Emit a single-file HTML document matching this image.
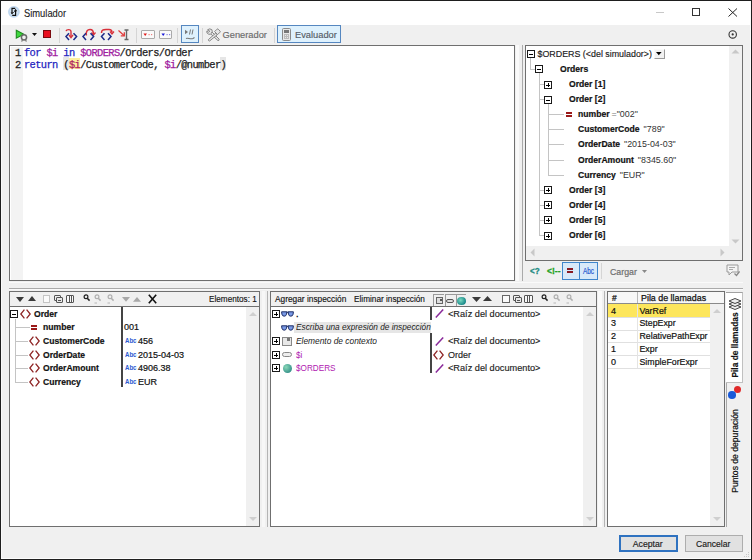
<!DOCTYPE html>
<html><head><meta charset="utf-8">
<style>
*{margin:0;padding:0;box-sizing:border-box}
html,body{width:752px;height:560px;overflow:hidden;background:#f0f0f0}
body{position:relative;font-family:"Liberation Sans",sans-serif;color:#000}
.a{position:absolute}
.t{position:absolute;white-space:nowrap;line-height:14px;height:14px}
.box{position:absolute;background:#fff;border:1px solid #6f6f6f}
.sq{position:absolute;width:9px;height:9px;border:1px solid #333;background:#fff}
.sq:before{content:"";position:absolute;left:1px;top:3px;width:5px;height:1px;background:#000}
.sq.p:after{content:"";position:absolute;left:3px;top:1px;width:1px;height:5px;background:#000}
.dv{position:absolute;width:0;border-left:1px dotted #a0a0a0}
.dh{position:absolute;height:0;border-top:1px dotted #a0a0a0}
.b{font-weight:bold}
.sep{position:absolute;width:1px;background:#d5d5d5}
</style></head><body>
<!-- window frame -->
<div class="a" style="left:0;top:0;width:752px;height:25px;background:#fff"></div>
<div class="a" style="left:1px;top:25px;width:1px;height:534px;background:#fafafa"></div>
<div class="a" style="left:750px;top:1px;width:1px;height:558px;background:#fcfcfc"></div>
<div class="a" style="left:1px;top:558px;width:750px;height:1px;background:#fcfcfc"></div>
<div class="a" style="left:0;top:0;width:752px;height:1px;background:#1e1e1e"></div>
<div class="a" style="left:0;top:0;width:1px;height:560px;background:#1e1e1e"></div>
<div class="a" style="left:0;top:559px;width:752px;height:1px;background:#1e1e1e"></div>
<div class="a" style="left:751px;top:0;width:1px;height:560px;background:#1e1e1e"></div>
<svg class="a" style="left:743px;top:551px" width="7" height="7"><g fill="#c8c8c8"><rect x="5" y="1" width="1" height="1"/><rect x="3" y="3" width="1" height="1"/><rect x="5" y="3" width="1" height="1"/><rect x="1" y="5" width="1" height="1"/><rect x="3" y="5" width="1" height="1"/><rect x="5" y="5" width="1" height="1"/></g></svg>

<!-- title -->
<svg class="a" style="left:7px;top:5px" width="14" height="14" viewBox="0 0 14 14">
<circle cx="6.9" cy="6.85" r="5.9" fill="#c0d8f0"/><circle cx="6.9" cy="6.85" r="4.2" fill="#d6e6f6"/>
<path d="M8.2 3.4H5V8.2" fill="none" stroke="#111" stroke-width="1.2"/><path d="M3.6 7.4L5 9.4L6.4 7.4Z" fill="#111"/>
<path d="M5.2 10.4H8.6V5.6" fill="none" stroke="#111" stroke-width="1.2"/><path d="M7 6.2L8.6 3.8L10.2 6.2Z" fill="#111"/>
<path d="M5.4 8.6L8.2 5.8" stroke="#333" stroke-width="0.8"/>
</svg>
<div class="t" style="left:24.3px;top:6.8px;font-size:10.4px;color:#1a1a1a;-webkit-text-stroke:0.1px #1a1a1a;transform:scaleX(0.9);transform-origin:0 0">Simulador</div>
<div class="a" style="left:656px;top:12px;width:8px;height:1px;background:#c8c8c8"></div>
<div class="a" style="left:692px;top:8px;width:8px;height:8px;border:1px solid #333"></div>
<svg class="a" style="left:728px;top:8px" width="10" height="9" viewBox="0 0 10 9"><path d="M0.5 0.5L9 8.5M9 0.5L0.5 8.5" stroke="#222" stroke-width="1"/></svg>

<!-- toolbar -->
<svg class="a" style="left:15px;top:29px" width="14" height="13" viewBox="0 0 14 13">
<path d="M1.3 1.3L8.8 5.2L1.3 9.2Z" fill="#3ed83e" stroke="#1e8a1e" stroke-width="1.1"/>
<circle cx="9" cy="8.3" r="2.6" fill="none" stroke="#6a6a6a" stroke-width="1.5"/><path d="M7.3 11L6.7 12.6M10.7 11L11.3 12.6" stroke="#6a6a6a" stroke-width="1.1"/>
</svg>
<svg class="a" style="left:32px;top:33px" width="5" height="3"><path d="M0 0H5L2.5 3Z" fill="#111"/></svg>
<div class="a" style="left:43px;top:30px;width:8px;height:8px;background:#ea1020;border:1px solid #7a0a10"></div>
<div class="sep" style="left:59px;top:28px;height:15px"></div>
<svg class="a" style="left:64px;top:28px" width="15" height="13" viewBox="0 0 15 13">
<path d="M2 3.2C2.5 1.2 6.8 0.8 7 3.5V8.5" fill="none" stroke="#d8303a" stroke-width="1.4"/><path d="M5 7L7 9.6L9 7" fill="none" stroke="#d8303a" stroke-width="1.4"/>
<path d="M5 5.2L2 8.6L5 12M9.5 5.2L12.6 8.6L9.5 12" fill="none" stroke="#1c2a88" stroke-width="1.5"/>
</svg>
<svg class="a" style="left:82px;top:28px" width="14" height="13" viewBox="0 0 14 13">
<path d="M4.5 7.5C3.5 3.5 5.5 1.5 8 1.5C10.5 1.5 11.5 3.2 11.5 6" fill="none" stroke="#d8303a" stroke-width="1.4"/><path d="M9.5 4.5L11.5 7L13.5 4.5" fill="none" stroke="#d8303a" stroke-width="1.3"/>
<path d="M4 5.2L1 8.6L4 12M8.5 5.2L11.6 8.6L8.5 12" fill="none" stroke="#1c2a88" stroke-width="1.5"/>
</svg>
<svg class="a" style="left:100px;top:28px" width="15" height="13" viewBox="0 0 15 13">
<path d="M1.5 5C1.5 1.8 3 1.5 6 1.5H9C11.5 1.5 12 2.5 12 4.5" fill="none" stroke="#d8303a" stroke-width="1.5"/><path d="M10 3.5L12 6L14 3.5" fill="none" stroke="#d8303a" stroke-width="1.3"/>
<path d="M4.5 5.2L1.5 8.6L4.5 12M8 5.2L11 8.6L8 12" fill="none" stroke="#1c2a88" stroke-width="1.5"/>
</svg>
<svg class="a" style="left:117px;top:29px" width="14" height="12" viewBox="0 0 14 12">
<path d="M1.5 1.5L7 6.5" stroke="#e03a3a" stroke-width="1.2"/><path d="M3.8 6.8H7.3V3.3" fill="none" stroke="#e03a3a" stroke-width="1.3"/>
<path d="M7.5 1H11.5M7.5 10.5H11.5M9.5 1V10.5" stroke="#666" stroke-width="1.4"/>
</svg>
<div class="sep" style="left:136px;top:28px;height:15px"></div>
<div class="a" style="left:141px;top:30px;width:14px;height:8.5px;border:1.2px solid #aaa;border-radius:1px;background:#fafafa"></div>
<svg class="a" style="left:143px;top:33px" width="10" height="4"><path d="M0.5 0.5H4L2.2 3Z" fill="#e01818"/><rect x="5.5" y="1" width="1.2" height="1.2" fill="#f08080"/><rect x="8" y="1" width="1.2" height="1.2" fill="#f08080"/></svg>
<div class="a" style="left:159px;top:30px;width:13px;height:8.5px;border:1.2px solid #aaa;border-radius:1px;background:#fafafa"></div>
<svg class="a" style="left:161px;top:33px" width="10" height="4"><path d="M0.5 0.5H4L2.2 3Z" fill="#1818d8"/><rect x="5.5" y="1" width="1.2" height="1.2" fill="#8080e0"/><rect x="8" y="1" width="1.2" height="1.2" fill="#8080e0"/></svg>
<div class="sep" style="left:177px;top:28px;height:15px"></div>
<div class="a" style="left:181px;top:25px;width:18px;height:18px;background:#def1fd;border:1.5px solid #5587c0"></div>
<svg class="a" style="left:184px;top:29px" width="12" height="12" viewBox="0 0 12 12">
<path d="M1 0.8L4 3L1 5.2Z" fill="#777"/><path d="M6.5 0.5L5.5 5.5M9 0.5L8 5.5" stroke="#777" stroke-width="1"/><path d="M2 9.5C4 8.5 6 10.5 9 9.5L10.5 8.5" fill="none" stroke="#777" stroke-width="1.1"/>
</svg>
<div class="sep" style="left:202px;top:28px;height:15px"></div>
<svg class="a" style="left:206px;top:28px" width="15" height="14" viewBox="0 0 15 14">
<g fill="#e6e6e6" stroke="#7c7c7c" stroke-width="0.9">
<path d="M4.6 5.8L6.2 4.2L13.2 11.2Q13.4 12.6 12 12.6Z"/>
<path d="M9.6 5.2L11.2 6.8L3.6 13Q2.2 13 2.4 11.6Z"/>
<path d="M8.6 3.6L11 1.2Q11.6 0.6 12.2 1.2L14 3Q14.6 3.6 14 4.2L11.6 6.6Z"/>
<path d="M1.6 1.8Q3.6 0 5.8 1.6Q6.8 3.4 5.6 5L4.4 6.2Q2.6 6.8 1.2 5.2Q0.4 3.8 1 2.8L2.6 4.2L3.8 3.2Z"/>
</g>
</svg>
<div class="t" style="left:222.5px;top:27.7px;font-size:9.3px;color:#6a6a6a;-webkit-text-stroke:0.15px #6a6a6a">Generador</div>
<div class="sep" style="left:274px;top:28px;height:15px"></div>
<div class="a" style="left:277px;top:25px;width:64px;height:18px;background:#def1fd;border:1.5px solid #5587c0"></div>
<div class="a" style="left:282px;top:28px;width:9px;height:13px;border:1px solid #8a8a8a;border-radius:1.5px;background:#e8e8e8"></div>
<div class="a" style="left:284px;top:30px;width:5px;height:2.5px;background:#777"></div>
<div class="a" style="left:284px;top:34px;width:5px;height:5px;background-image:linear-gradient(to right,#bbb 1px,transparent 1px),linear-gradient(to bottom,#bbb 1px,transparent 1px);background-size:2px 2px"></div>
<div class="t" style="left:295px;top:27.7px;font-size:9.3px;color:#555c66;-webkit-text-stroke:0.15px #555c66">Evaluador</div>
<svg class="a" style="left:726px;top:28px" width="13" height="13" viewBox="0 0 13 13"><circle cx="6.7" cy="6.4" r="3.7" fill="none" stroke="#333" stroke-width="1.1"/><circle cx="6.7" cy="6.4" r="1.1" fill="#333"/></svg>

<!-- editor -->
<div class="box" style="left:9px;top:45px;width:506px;height:236px"></div>
<div class="a" style="left:11px;top:47px;width:12px;height:233px;background:#f3f3f3"></div>
<div class="a" style="left:63px;top:57px;width:5.5px;height:12.5px;background:#e6e6e6"></div><div class="a" style="left:68.5px;top:57.5px;width:11.5px;height:11px;background:#fdf0a0"></div><div class="a" style="left:220px;top:57px;width:5.5px;height:12.5px;background:#e6e6e6"></div>
<div style="position:absolute;left:15px;top:47px;font-family:'Liberation Mono',monospace;font-size:10.4px;line-height:12px;letter-spacing:-0.62px;white-space:pre;color:#222;-webkit-text-stroke:0.3px #222">1<br>2</div>
<div style="position:absolute;left:24px;top:47px;font-family:'Liberation Mono',monospace;font-size:10.4px;line-height:12px;letter-spacing:-0.62px;white-space:pre;color:#222;-webkit-text-stroke:0.25px"><span style="color:#2424c0">for</span> <span style="color:#a020a0">$i</span> <span style="color:#2424c0">in</span> <span style="color:#a020a0">$ORDERS</span>/Orders/Order
<span style="color:#2424c0">return</span> (<span style="color:#b02060">$i</span>/CustomerCode, <span style="color:#a020a0">$i</span>/@number)</div>

<!-- splitter -->
<div class="a" style="left:516px;top:45px;width:3px;height:236px;background:#fafafa"></div><div class="a" style="left:522px;top:45px;width:1px;height:236px;background:#aaa"></div>

<!-- right tree panel -->
<div class="box" style="left:525px;top:45px;width:218px;height:216px"></div>
<div class="a" style="left:729px;top:46px;width:13px;height:200px;background:#f0f0f0"></div>
<svg class="a" style="left:731px;top:49px" width="9" height="5"><path d="M0.5 4.5L4.5 0.5L8.5 4.5Z" fill="#c8c8c8"/></svg>
<svg class="a" style="left:731px;top:239px" width="9" height="5"><path d="M0.5 0.5L4.5 4.5L8.5 0.5Z" fill="#c8c8c8"/></svg>
<div class="a" style="left:526px;top:246px;width:203px;height:14px;background:#f0f0f0"></div>
<div class="a" style="left:729px;top:246px;width:13px;height:14px;background:#f0f0f0"></div>
<svg class="a" style="left:530px;top:248px" width="5" height="9"><path d="M4.5 0.5L0.5 4.5L4.5 8.5Z" fill="#c8c8c8"/></svg>
<svg class="a" style="left:720px;top:248px" width="5" height="9"><path d="M0.5 0.5L4.5 4.5L0.5 8.5Z" fill="#c8c8c8"/></svg>

<div class="a" style="left:530px;top:58px;width:1px;height:12px;background:#c4c4c4"></div>
<div class="a" style="left:531px;top:69px;width:5px;height:1px;background:#c4c4c4"></div>
<div class="a" style="left:539px;top:73px;width:1px;height:163px;background:#c4c4c4"></div>
<div class="a" style="left:540px;top:84px;width:5px;height:1px;background:#c4c4c4"></div>
<div class="a" style="left:540px;top:99px;width:5px;height:1px;background:#c4c4c4"></div>
<div class="a" style="left:540px;top:190px;width:5px;height:1px;background:#c4c4c4"></div>
<div class="a" style="left:540px;top:205px;width:5px;height:1px;background:#c4c4c4"></div>
<div class="a" style="left:540px;top:220px;width:5px;height:1px;background:#c4c4c4"></div>
<div class="a" style="left:540px;top:235px;width:5px;height:1px;background:#c4c4c4"></div>
<div class="a" style="left:548px;top:104px;width:1px;height:72px;background:#c4c4c4"></div>
<div class="a" style="left:549px;top:114px;width:15px;height:1px;background:#c4c4c4"></div>
<div class="a" style="left:549px;top:129px;width:15px;height:1px;background:#c4c4c4"></div>
<div class="a" style="left:549px;top:144px;width:15px;height:1px;background:#c4c4c4"></div>
<div class="a" style="left:549px;top:160px;width:15px;height:1px;background:#c4c4c4"></div>
<div class="a" style="left:549px;top:175px;width:15px;height:1px;background:#c4c4c4"></div>
<div class="a" style="left:527px;top:50px;width:8px;height:8px;border:1.2px solid #1a1a1a;background:#fff"></div><div class="a" style="left:529px;top:53.5px;width:4px;height:1px;background:#000"></div>
<div class="t" style="left:537.5px;top:46.80px;font-size:8.9px;line-height:14px;height:14px;color:#1a1a1a;-webkit-text-stroke:0.15px #1a1a1a;">$ORDERS (&lt;del simulador&gt;)</div>
<div class="a" style="left:654px;top:49.2px;width:11px;height:9.5px;background:#f2f2f2;border-left:1px solid #fafafa;border-top:1px solid #fafafa;border-right:1.5px solid #9a9a9a;border-bottom:1.5px solid #9a9a9a"></div><svg class="a" style="left:656px;top:51.8px" width="6" height="4"><path d="M0 0H5.6L2.8 3.2Z" fill="#000"/></svg>
<div class="a" style="left:535px;top:65px;width:8px;height:8px;border:1.2px solid #1a1a1a;background:#fff"></div><div class="a" style="left:537px;top:68.5px;width:4px;height:1px;background:#000"></div>
<div class="t" style="left:560px;top:61.90px;font-size:8.6px;line-height:14px;height:14px;font-weight:bold;color:#111;-webkit-text-stroke:0.2px #111;">Orders</div>
<div class="a" style="left:544px;top:81px;width:8px;height:8px;border:1.2px solid #1a1a1a;background:#fff"></div><div class="a" style="left:546px;top:84.5px;width:4px;height:1px;background:#000"></div><div class="a" style="left:547.5px;top:83px;width:1px;height:4px;background:#000"></div>
<div class="t" style="left:569px;top:77.00px;font-size:8.6px;line-height:14px;height:14px;font-weight:bold;color:#111;-webkit-text-stroke:0.2px #111;">Order [1]</div>
<div class="a" style="left:544px;top:96px;width:8px;height:8px;border:1.2px solid #1a1a1a;background:#fff"></div><div class="a" style="left:546px;top:99.5px;width:4px;height:1px;background:#000"></div>
<div class="t" style="left:569px;top:92.10px;font-size:8.6px;line-height:14px;height:14px;font-weight:bold;color:#111;-webkit-text-stroke:0.2px #111;">Order [2]</div>
<div class="a" style="left:544px;top:186px;width:8px;height:8px;border:1.2px solid #1a1a1a;background:#fff"></div><div class="a" style="left:546px;top:189.5px;width:4px;height:1px;background:#000"></div><div class="a" style="left:547.5px;top:188px;width:1px;height:4px;background:#000"></div>
<div class="t" style="left:569px;top:182.70px;font-size:8.6px;line-height:14px;height:14px;font-weight:bold;color:#111;-webkit-text-stroke:0.2px #111;">Order [3]</div>
<div class="a" style="left:544px;top:201px;width:8px;height:8px;border:1.2px solid #1a1a1a;background:#fff"></div><div class="a" style="left:546px;top:204.5px;width:4px;height:1px;background:#000"></div><div class="a" style="left:547.5px;top:203px;width:1px;height:4px;background:#000"></div>
<div class="t" style="left:569px;top:197.80px;font-size:8.6px;line-height:14px;height:14px;font-weight:bold;color:#111;-webkit-text-stroke:0.2px #111;">Order [4]</div>
<div class="a" style="left:544px;top:216px;width:8px;height:8px;border:1.2px solid #1a1a1a;background:#fff"></div><div class="a" style="left:546px;top:219.5px;width:4px;height:1px;background:#000"></div><div class="a" style="left:547.5px;top:218px;width:1px;height:4px;background:#000"></div>
<div class="t" style="left:569px;top:212.90px;font-size:8.6px;line-height:14px;height:14px;font-weight:bold;color:#111;-webkit-text-stroke:0.2px #111;">Order [5]</div>
<div class="a" style="left:544px;top:232px;width:8px;height:8px;border:1.2px solid #1a1a1a;background:#fff"></div><div class="a" style="left:546px;top:235.5px;width:4px;height:1px;background:#000"></div><div class="a" style="left:547.5px;top:234px;width:1px;height:4px;background:#000"></div>
<div class="t" style="left:569px;top:228.00px;font-size:8.6px;line-height:14px;height:14px;font-weight:bold;color:#111;-webkit-text-stroke:0.2px #111;">Order [6]</div>
<div class="a" style="left:566px;top:112px;width:6px;height:1.6px;background:#9a1a1a"></div><div class="a" style="left:566px;top:115px;width:6px;height:1.6px;background:#9a1a1a"></div>
<div class="t" style="left:578px;top:107.20px;font-size:8.6px;line-height:14px;height:14px;font-weight:bold;color:#111;-webkit-text-stroke:0.2px #111;">number<span style="font-weight:normal;color:#333;-webkit-text-stroke:0;margin-left:2px;font-size:8.9px"><span style="color:#777">=</span>&quot;002&quot;</span></div>
<div class="t" style="left:578px;top:122.30px;font-size:8.6px;line-height:14px;height:14px;font-weight:bold;color:#111;-webkit-text-stroke:0.2px #111;">CustomerCode<span style="font-weight:normal;color:#333;-webkit-text-stroke:0;margin-left:4px;font-size:8.9px">&quot;789&quot;</span></div>
<div class="t" style="left:578px;top:137.40px;font-size:8.6px;line-height:14px;height:14px;font-weight:bold;color:#111;-webkit-text-stroke:0.2px #111;">OrderDate<span style="font-weight:normal;color:#333;-webkit-text-stroke:0;margin-left:4px;font-size:8.9px">&quot;2015-04-03&quot;</span></div>
<div class="t" style="left:578px;top:152.50px;font-size:8.6px;line-height:14px;height:14px;font-weight:bold;color:#111;-webkit-text-stroke:0.2px #111;">OrderAmount<span style="font-weight:normal;color:#333;-webkit-text-stroke:0;margin-left:4px;font-size:8.9px">&quot;8345.60&quot;</span></div>
<div class="t" style="left:578px;top:167.60px;font-size:8.6px;line-height:14px;height:14px;font-weight:bold;color:#111;-webkit-text-stroke:0.2px #111;">Currency<span style="font-weight:normal;color:#333;-webkit-text-stroke:0;margin-left:4px;font-size:8.9px">&quot;EUR&quot;</span></div>


<!-- right panel bottom toolbar -->
<div class="t" style="left:530px;top:264.3px;font-size:9.5px;color:#1a8a80;font-weight:bold;transform:scaleX(0.85);transform-origin:0 0;-webkit-text-stroke:0.3px #1a8a80">&lt;?</div>
<div class="t" style="left:546.5px;top:264.3px;font-size:9.5px;color:#20a020;font-weight:bold;transform:scaleX(0.9);transform-origin:0 0;-webkit-text-stroke:0.3px #20a020">&lt;!--</div>
<div class="a" style="left:562px;top:262px;width:18px;height:18px;background:#d8e9f9;border:1.3px solid #3f86cc"></div>
<div class="a" style="left:579px;top:262px;width:19px;height:18px;background:#d8e9f9;border:1.3px solid #3f86cc"></div>
<div class="a" style="left:567px;top:268px;width:6px;height:1.8px;background:#8a1a22"></div>
<div class="a" style="left:567px;top:271.2px;width:6px;height:1.8px;background:#8a1a22"></div>
<div class="t" style="left:582.7px;top:264.5px;font-size:8.2px;color:#2a5ad0;transform:scaleX(0.78);transform-origin:0 0;-webkit-text-stroke:0.2px #2a5ad0">Abc</div>
<div class="sep" style="left:601px;top:263px;height:16px"></div>
<div class="t" style="left:610px;top:264.6px;font-size:8.8px;color:#6e6e6e;-webkit-text-stroke:0.2px #6e6e6e">Cargar</div>
<svg class="a" style="left:642px;top:270px" width="5" height="3"><path d="M0 0H5L2.5 3Z" fill="#888"/></svg>
<svg class="a" style="left:726px;top:264px" width="14" height="13" viewBox="0 0 14 13"><path d="M1 1H12V8H6L3 11V8H1Z" fill="#f4f4f4" stroke="#9a9a9a"/><path d="M3 3.5H9M3 5.5H7" stroke="#aaa"/><path d="M8.5 9.5L10.5 11.5L13.5 7.5" fill="none" stroke="#888" stroke-width="1.3"/></svg>

<!-- horizontal splitter -->
<div class="a" style="left:9px;top:282px;width:734px;height:1px;background:#fafafa"></div><div class="a" style="left:9px;top:288px;width:734px;height:1px;background:#aaa"></div><div class="a" style="left:9px;top:289px;width:734px;height:1px;background:#fafafa"></div>

<!-- bottom left panel -->
<div class="box" style="left:9px;top:291px;width:251px;height:236px"></div>
<div class="a" style="left:10px;top:292px;width:249px;height:15px;background:#f0f0f0;border-bottom:1px solid #6f6f6f"></div>
<svg class="a" style="left:15.6px;top:297px" width="8" height="5"><path d="M0 0H8L4.0 5Z" fill="#3a3a3a"/></svg>
<svg class="a" style="left:28.1px;top:296px" width="8" height="5"><path d="M0 5H8L4.0 0Z" fill="#3a3a3a"/></svg>
<div class="a" style="left:43.1px;top:294.5px;width:7px;height:8px;border:1px solid #c4c4c4;background:#fafafa"></div>
<div class="a" style="left:54.1px;top:294.5px;width:6.5px;height:6.5px;border:1px solid #555;border-radius:1px"></div><div class="a" style="left:56.1px;top:296.5px;width:6.5px;height:6.5px;border:1px solid #555;border-radius:1px;background:#e8e8e8"></div><div class="a" style="left:57.6px;top:299.5px;width:3px;height:1.5px;background:#555"></div>
<div class="a" style="left:65.6px;top:294.5px;width:8.5px;height:8px;border:1px solid #555;border-radius:1px;background:#f8f8f8"></div><div class="a" style="left:68.6px;top:295.5px;width:1px;height:6px;background:#555"></div><div class="a" style="left:70.6px;top:295.5px;width:1px;height:6px;background:#555"></div>
<svg class="a" style="left:82.6px;top:294px" width="8" height="10" viewBox="0 0 8 10"><circle cx="3" cy="2.8" r="1.9" fill="none" stroke="#222" stroke-width="1.2"/><path d="M4.2 4.2L6.6 6.6" stroke="#222" stroke-width="1.5"/></svg>
<svg class="a" style="left:94.1px;top:294px" width="8" height="10" viewBox="0 0 8 10"><circle cx="3" cy="2.8" r="1.9" fill="none" stroke="#b0b0b0" stroke-width="1.2"/><path d="M4.2 4.2L6.6 6.6" stroke="#b0b0b0" stroke-width="1.5"/><path d="M0.5 9h2.5" stroke="#b0b0b0" stroke-width="0.9"/></svg>
<svg class="a" style="left:107.1px;top:294px" width="8" height="10" viewBox="0 0 8 10"><circle cx="3" cy="2.8" r="1.9" fill="none" stroke="#b0b0b0" stroke-width="1.2"/><path d="M4.2 4.2L6.6 6.6" stroke="#b0b0b0" stroke-width="1.5"/><path d="M0.5 9h2.5" stroke="#b0b0b0" stroke-width="0.9"/></svg>
<svg class="a" style="left:121.8px;top:297px" width="8" height="4.7"><path d="M0 0H8L4.0 4.7Z" fill="#a8a8a8"/></svg>
<svg class="a" style="left:132.8px;top:297px" width="8" height="4.7"><path d="M0 4.7H8L4.0 0Z" fill="#a8a8a8"/></svg>
<svg class="a" style="left:148px;top:294px" width="9" height="10"><path d="M0.8 0.8L8.2 9.2M8.2 0.8L0.8 9.2" stroke="#111" stroke-width="1.6"/></svg>
<div class="t" style="left:208.5px;top:292.30px;font-size:9.8px;line-height:14px;height:14px;color:#111;transform:scaleX(0.835);transform-origin:0 0;-webkit-text-stroke:0.15px #111;">Elementos: 1</div>
<div class="a" style="left:15px;top:319px;width:1px;height:64px;background:#c4c4c4"></div>
<div class="a" style="left:16px;top:327px;width:14px;height:1px;background:#c4c4c4"></div>
<div class="a" style="left:16px;top:341px;width:12px;height:1px;background:#c4c4c4"></div>
<div class="a" style="left:16px;top:355px;width:12px;height:1px;background:#c4c4c4"></div>
<div class="a" style="left:16px;top:368px;width:12px;height:1px;background:#c4c4c4"></div>
<div class="a" style="left:16px;top:382px;width:12px;height:1px;background:#c4c4c4"></div>
<div class="a" style="left:10px;top:310px;width:8px;height:8px;border:1.2px solid #1a1a1a;background:#fff"></div><div class="a" style="left:12px;top:313.5px;width:4px;height:1px;background:#000"></div>
<svg class="a" style="left:20px;top:308.8px" width="11" height="10" viewBox="0 0 11 10"><path d="M4.4 0.6L0.8 5L4.4 9.4M6.6 0.6L10.2 5L6.6 9.4" fill="none" stroke="#8e2424" stroke-width="1.3"/></svg>
<div class="t" style="left:34px;top:306.80px;font-size:8.6px;line-height:14px;height:14px;font-weight:bold;color:#111;-webkit-text-stroke:0.2px #111;">Order</div>
<div class="a" style="left:30.5px;top:325.1px;width:6px;height:1.6px;background:#9a1a1a"></div><div class="a" style="left:30.5px;top:328.3px;width:6px;height:1.6px;background:#9a1a1a"></div>
<div class="t" style="left:43px;top:320.40px;font-size:8.6px;line-height:14px;height:14px;font-weight:bold;color:#111;-webkit-text-stroke:0.2px #111;">number</div>
<svg class="a" style="left:28.5px;top:336.0px" width="11" height="10" viewBox="0 0 11 10"><path d="M4.4 0.6L0.8 5L4.4 9.4M6.6 0.6L10.2 5L6.6 9.4" fill="none" stroke="#8e2424" stroke-width="1.3"/></svg>
<div class="t" style="left:43px;top:334.00px;font-size:8.6px;line-height:14px;height:14px;font-weight:bold;color:#111;-webkit-text-stroke:0.2px #111;">CustomerCode</div>
<svg class="a" style="left:28.5px;top:349.6px" width="11" height="10" viewBox="0 0 11 10"><path d="M4.4 0.6L0.8 5L4.4 9.4M6.6 0.6L10.2 5L6.6 9.4" fill="none" stroke="#8e2424" stroke-width="1.3"/></svg>
<div class="t" style="left:43px;top:347.60px;font-size:8.6px;line-height:14px;height:14px;font-weight:bold;color:#111;-webkit-text-stroke:0.2px #111;">OrderDate</div>
<svg class="a" style="left:28.5px;top:363.2px" width="11" height="10" viewBox="0 0 11 10"><path d="M4.4 0.6L0.8 5L4.4 9.4M6.6 0.6L10.2 5L6.6 9.4" fill="none" stroke="#8e2424" stroke-width="1.3"/></svg>
<div class="t" style="left:43px;top:361.20px;font-size:8.6px;line-height:14px;height:14px;font-weight:bold;color:#111;-webkit-text-stroke:0.2px #111;">OrderAmount</div>
<svg class="a" style="left:28.5px;top:376.8px" width="11" height="10" viewBox="0 0 11 10"><path d="M4.4 0.6L0.8 5L4.4 9.4M6.6 0.6L10.2 5L6.6 9.4" fill="none" stroke="#8e2424" stroke-width="1.3"/></svg>
<div class="t" style="left:43px;top:374.80px;font-size:8.6px;line-height:14px;height:14px;font-weight:bold;color:#111;-webkit-text-stroke:0.2px #111;">Currency</div>
<div class="t" style="left:124px;top:320.40px;font-size:9px;line-height:14px;height:14px;color:#111;-webkit-text-stroke:0.2px #111;">001</div>
<div class="t" style="left:124.5px;top:336.0px;font-size:7.4px;line-height:9px;height:9px;color:#2a5ad0;font-weight:bold;transform:scaleX(0.82);transform-origin:0 0">Abc</div>
<div class="t" style="left:138px;top:334.00px;font-size:9px;line-height:14px;height:14px;color:#111;-webkit-text-stroke:0.2px #111;">456</div>
<div class="t" style="left:124.5px;top:349.6px;font-size:7.4px;line-height:9px;height:9px;color:#2a5ad0;font-weight:bold;transform:scaleX(0.82);transform-origin:0 0">Abc</div>
<div class="t" style="left:138px;top:347.60px;font-size:9px;line-height:14px;height:14px;color:#111;-webkit-text-stroke:0.2px #111;">2015-04-03</div>
<div class="t" style="left:124.5px;top:363.2px;font-size:7.4px;line-height:9px;height:9px;color:#2a5ad0;font-weight:bold;transform:scaleX(0.82);transform-origin:0 0">Abc</div>
<div class="t" style="left:138px;top:361.20px;font-size:9px;line-height:14px;height:14px;color:#111;-webkit-text-stroke:0.2px #111;">4906.38</div>
<div class="t" style="left:124.5px;top:376.8px;font-size:7.4px;line-height:9px;height:9px;color:#2a5ad0;font-weight:bold;transform:scaleX(0.82);transform-origin:0 0">Abc</div>
<div class="t" style="left:138px;top:374.80px;font-size:9px;line-height:14px;height:14px;color:#111;-webkit-text-stroke:0.2px #111;">EUR</div>
<div class="a" style="left:121px;top:307px;width:1.5px;height:80px;background:#444"></div>
<div class="a" style="left:246px;top:307px;width:13px;height:219px;background:#f0f0f0"></div>
<svg class="a" style="left:248.5px;top:312px" width="8" height="4"><path d="M0 4H8L4.0 0Z" fill="#cfcfcf"/></svg>
<svg class="a" style="left:248.5px;top:517.3px" width="8" height="4"><path d="M0 0H8L4.0 4Z" fill="#cfcfcf"/></svg>


<!-- vertical splitters -->
<div class="a" style="left:262px;top:291px;width:3px;height:236px;background:#f7f7f7"></div><div class="a" style="left:267px;top:291px;width:1px;height:236px;background:#b4b4b4"></div>
<div class="a" style="left:598px;top:291px;width:4px;height:236px;background:#fafafa"></div><div class="a" style="left:604px;top:291px;width:1px;height:236px;background:#b4b4b4"></div>

<!-- bottom middle panel -->
<div class="box" style="left:270px;top:291px;width:327px;height:236px"></div>
<div class="a" style="left:271px;top:292px;width:325px;height:15px;background:#f0f0f0;border-bottom:1px solid #6f6f6f"></div>
<div class="t" style="left:274.6px;top:292.30px;font-size:9.8px;line-height:14px;height:14px;color:#111;transform:scaleX(0.85);transform-origin:0 0;-webkit-text-stroke:0.15px #111;">Agregar inspección</div>
<div class="t" style="left:354px;top:292.30px;font-size:9.8px;line-height:14px;height:14px;color:#111;transform:scaleX(0.84);transform-origin:0 0;-webkit-text-stroke:0.15px #111;">Eliminar inspección</div>
<div class="a" style="left:433px;top:293.5px;width:11px;height:12px;border-left:1.2px solid #9a9a9a;border-top:1.2px solid #9a9a9a"></div><div class="a" style="left:444.5px;top:293.5px;width:11px;height:12px;border-left:1.2px solid #9a9a9a;border-top:1.2px solid #9a9a9a"></div><div class="a" style="left:455.5px;top:293.5px;width:10px;height:12px;border-left:1.2px solid #9a9a9a;border-top:1.2px solid #9a9a9a"></div><div class="a" style="left:435.5px;top:297px;width:7.5px;height:6.5px;border:1px solid #666;background:#ddd"></div><div class="a" style="left:439.5px;top:298.5px;width:2px;height:2px;background:#555"></div><div class="a" style="left:445.5px;top:298.5px;width:8px;height:4.5px;border:1.1px solid #555;border-radius:2px;background:#ddd"></div><div class="a" style="left:456.5px;top:296.5px;width:9px;height:8.5px;border-radius:50%;background:radial-gradient(circle at 40% 40%,#7ad8c0,#1a8a8a 70%,#156a70)"></div>
<svg class="a" style="left:472px;top:297px" width="9" height="5"><path d="M0 0H9L4.5 5Z" fill="#3a3a3a"/></svg>
<svg class="a" style="left:483px;top:296px" width="9" height="5"><path d="M0 5H9L4.5 0Z" fill="#3a3a3a"/></svg>
<div class="a" style="left:502px;top:294.5px;width:7.5px;height:8px;border:1px solid #666;border-right-width:1.5px;border-bottom-width:1.5px;background:#fafafa"></div><div class="a" style="left:513px;top:294.5px;width:6.5px;height:6.5px;border:1px solid #555;border-radius:1px"></div><div class="a" style="left:515px;top:296.5px;width:6.5px;height:6.5px;border:1px solid #555;border-radius:1px;background:#e8e8e8"></div><div class="a" style="left:516.5px;top:299.5px;width:3px;height:1.5px;background:#555"></div>
<div class="a" style="left:524px;top:294.5px;width:8.5px;height:8px;border:1px solid #555;border-radius:1px;background:#f8f8f8"></div><div class="a" style="left:527px;top:295.5px;width:1px;height:6px;background:#555"></div><div class="a" style="left:529px;top:295.5px;width:1px;height:6px;background:#555"></div>
<svg class="a" style="left:541px;top:294px" width="8" height="10" viewBox="0 0 8 10"><circle cx="3" cy="2.8" r="1.9" fill="none" stroke="#222" stroke-width="1.2"/><path d="M4.2 4.2L6.6 6.6" stroke="#222" stroke-width="1.5"/></svg>
<svg class="a" style="left:553px;top:294px" width="8" height="10" viewBox="0 0 8 10"><circle cx="3" cy="2.8" r="1.9" fill="none" stroke="#b0b0b0" stroke-width="1.2"/><path d="M4.2 4.2L6.6 6.6" stroke="#b0b0b0" stroke-width="1.5"/><path d="M0.5 9h2.5" stroke="#b0b0b0" stroke-width="0.9"/></svg>
<svg class="a" style="left:566px;top:294px" width="8" height="10" viewBox="0 0 8 10"><circle cx="3" cy="2.8" r="1.9" fill="none" stroke="#b0b0b0" stroke-width="1.2"/><path d="M4.2 4.2L6.6 6.6" stroke="#b0b0b0" stroke-width="1.5"/><path d="M0.5 9h2.5" stroke="#b0b0b0" stroke-width="0.9"/></svg>
<div class="a" style="left:272px;top:310px;width:8px;height:8px;border:1.2px solid #1a1a1a;background:#fff"></div><div class="a" style="left:274px;top:313.5px;width:4px;height:1px;background:#000"></div><div class="a" style="left:275.5px;top:312px;width:1px;height:4px;background:#000"></div>
<div class="a" style="left:272px;top:337px;width:8px;height:8px;border:1.2px solid #1a1a1a;background:#fff"></div><div class="a" style="left:274px;top:340.5px;width:4px;height:1px;background:#000"></div><div class="a" style="left:275.5px;top:339px;width:1px;height:4px;background:#000"></div>
<div class="a" style="left:272px;top:351px;width:8px;height:8px;border:1.2px solid #1a1a1a;background:#fff"></div><div class="a" style="left:274px;top:354.5px;width:4px;height:1px;background:#000"></div><div class="a" style="left:275.5px;top:353px;width:1px;height:4px;background:#000"></div>
<div class="a" style="left:272px;top:364px;width:8px;height:8px;border:1.2px solid #1a1a1a;background:#fff"></div><div class="a" style="left:274px;top:367.5px;width:4px;height:1px;background:#000"></div><div class="a" style="left:275.5px;top:366px;width:1px;height:4px;background:#000"></div>
<svg class="a" style="left:281px;top:311.2px" width="13" height="6" viewBox="0 0 13 6"><path d="M0.6 0.8H5.9L5.5 3.2Q5.1 5.2 3.2 5.2Q1.3 5.2 0.9 3.2Z" fill="#7a9ae6" stroke="#1e2e66" stroke-width="1"/><path d="M7.1 0.8H12.4L12.1 3.2Q11.7 5.2 9.8 5.2Q7.9 5.2 7.5 3.2Z" fill="#7a9ae6" stroke="#1e2e66" stroke-width="1"/><path d="M5.8 1.3H7.2" stroke="#1e2e66" stroke-width="1"/></svg>
<div class="t" style="left:296px;top:306.80px;font-size:9px;line-height:14px;height:14px;color:#111;-webkit-text-stroke:0.3px #111;">.</div>
<div class="a" style="left:294px;top:322px;width:137px;height:11px;background:#e6e6e6"></div>
<svg class="a" style="left:281px;top:324.8px" width="13" height="6" viewBox="0 0 13 6"><path d="M0.6 0.8H5.9L5.5 3.2Q5.1 5.2 3.2 5.2Q1.3 5.2 0.9 3.2Z" fill="#7a9ae6" stroke="#1e2e66" stroke-width="1"/><path d="M7.1 0.8H12.4L12.1 3.2Q11.7 5.2 9.8 5.2Q7.9 5.2 7.5 3.2Z" fill="#7a9ae6" stroke="#1e2e66" stroke-width="1"/><path d="M5.8 1.3H7.2" stroke="#1e2e66" stroke-width="1"/></svg>
<div class="t" style="left:295.5px;top:320.40px;font-size:9.3px;line-height:14px;height:14px;color:#222;transform:scaleX(0.89);transform-origin:0 0;font-style:italic;">Escriba una expresión de inspección</div>
<div class="a" style="left:282px;top:336.5px;width:10px;height:9px;border:1px solid #888;background:#e8e8e8"></div><div class="a" style="left:287px;top:338.0px;width:3px;height:3px;background:#777"></div>
<div class="t" style="left:295.5px;top:334.00px;font-size:9.3px;line-height:14px;height:14px;color:#222;transform:scaleX(0.9);transform-origin:0 0;font-style:italic;">Elemento de contexto</div>
<div class="a" style="left:282px;top:352.1px;width:10px;height:5px;border:1px solid #888;border-radius:2.5px;background:#eee"></div>
<div class="t" style="left:295.5px;top:347.60px;font-size:9.3px;line-height:14px;height:14px;color:#b020b0;transform:scaleX(0.88);transform-origin:0 0;">$i</div>
<div class="a" style="left:283px;top:363.7px;width:9px;height:9px;border-radius:50%;background:radial-gradient(circle at 35% 35%,#8ad8b8,#1a7a7a)"></div>
<div class="t" style="left:295.5px;top:361.20px;font-size:9.3px;line-height:14px;height:14px;color:#b020b0;transform:scaleX(0.88);transform-origin:0 0;">$ORDERS</div>
<div class="a" style="left:430px;top:307px;width:1.5px;height:13px;background:#444"></div><div class="a" style="left:430px;top:333px;width:1.5px;height:40px;background:#444"></div>
<svg class="a" style="left:435px;top:309.3px" width="9" height="9"><path d="M0.8 8.5L8.2 0.5" stroke="#8a2a9a" stroke-width="1.5"/></svg>
<div class="t" style="left:448px;top:306.80px;font-size:9.2px;line-height:14px;height:14px;color:#222;-webkit-text-stroke:0.15px #222;">&lt;Raíz del documento&gt;</div>
<svg class="a" style="left:435px;top:336.5px" width="9" height="9"><path d="M0.8 8.5L8.2 0.5" stroke="#8a2a9a" stroke-width="1.5"/></svg>
<div class="t" style="left:448px;top:334.00px;font-size:9.2px;line-height:14px;height:14px;color:#222;-webkit-text-stroke:0.15px #222;">&lt;Raíz del documento&gt;</div>
<svg class="a" style="left:435px;top:363.7px" width="9" height="9"><path d="M0.8 8.5L8.2 0.5" stroke="#8a2a9a" stroke-width="1.5"/></svg>
<div class="t" style="left:448px;top:361.20px;font-size:9.2px;line-height:14px;height:14px;color:#222;-webkit-text-stroke:0.15px #222;">&lt;Raíz del documento&gt;</div>
<svg class="a" style="left:433px;top:349.6px" width="11" height="10" viewBox="0 0 11 10"><path d="M4.4 0.6L0.8 5L4.4 9.4M6.6 0.6L10.2 5L6.6 9.4" fill="none" stroke="#8e2424" stroke-width="1.3"/></svg>
<div class="t" style="left:448px;top:347.60px;font-size:9.0px;line-height:14px;height:14px;color:#222;-webkit-text-stroke:0.15px #222;">Order</div>
<div class="a" style="left:583px;top:307px;width:13px;height:219px;background:#f0f0f0"></div>
<svg class="a" style="left:585.5px;top:312px" width="8" height="4"><path d="M0 4H8L4.0 0Z" fill="#cfcfcf"/></svg>
<svg class="a" style="left:585.5px;top:517.3px" width="8" height="4"><path d="M0 0H8L4.0 4Z" fill="#cfcfcf"/></svg>


<!-- call stack panel -->
<div class="box" style="left:607px;top:291px;width:118px;height:236px"></div>
<div class="a" style="left:608px;top:292px;width:116px;height:12px;background:#f7f7f7;border-bottom:1px solid #8a8a8a"></div>
<div class="a" style="left:637px;top:292px;width:1px;height:11px;background:#b8b8b8"></div>
<div class="t" style="left:612px;top:291.20px;font-size:8.5px;line-height:14px;height:14px;font-weight:bold;color:#222;-webkit-text-stroke:0.2px #222;">#</div>
<div class="t" style="left:641px;top:291.40px;font-size:8.9px;line-height:14px;height:14px;color:#111;-webkit-text-stroke:0.25px #111;">Pila de llamadas</div>
<div class="a" style="left:608px;top:304px;width:102px;height:12.5px;background:#fde65c"></div>
<div class="t" style="left:611px;top:303.60px;font-size:9px;line-height:14px;height:14px;color:#111;-webkit-text-stroke:0.2px #111;">4</div>
<div class="t" style="left:639.5px;top:303.60px;font-size:8.8px;line-height:14px;height:14px;color:#111;-webkit-text-stroke:0.2px #111;">VarRef</div>
<div class="a" style="left:608px;top:316.8px;width:102px;height:1px;background:#e0e0e0"></div>
<div class="t" style="left:611px;top:316.40px;font-size:9px;line-height:14px;height:14px;color:#111;-webkit-text-stroke:0.2px #111;">3</div>
<div class="t" style="left:639.5px;top:316.40px;font-size:8.8px;line-height:14px;height:14px;color:#111;-webkit-text-stroke:0.2px #111;">StepExpr</div>
<div class="a" style="left:608px;top:329.6px;width:102px;height:1px;background:#e0e0e0"></div>
<div class="t" style="left:611px;top:329.20px;font-size:9px;line-height:14px;height:14px;color:#111;-webkit-text-stroke:0.2px #111;">2</div>
<div class="t" style="left:639.5px;top:329.20px;font-size:8.8px;line-height:14px;height:14px;color:#111;-webkit-text-stroke:0.2px #111;">RelativePathExpr</div>
<div class="a" style="left:608px;top:342.4px;width:102px;height:1px;background:#e0e0e0"></div>
<div class="t" style="left:611px;top:342.00px;font-size:9px;line-height:14px;height:14px;color:#111;-webkit-text-stroke:0.2px #111;">1</div>
<div class="t" style="left:639.5px;top:342.00px;font-size:8.8px;line-height:14px;height:14px;color:#111;-webkit-text-stroke:0.2px #111;">Expr</div>
<div class="a" style="left:608px;top:355.2px;width:102px;height:1px;background:#e0e0e0"></div>
<div class="t" style="left:611px;top:354.80px;font-size:9px;line-height:14px;height:14px;color:#111;-webkit-text-stroke:0.2px #111;">0</div>
<div class="t" style="left:639.5px;top:354.80px;font-size:8.8px;line-height:14px;height:14px;color:#111;-webkit-text-stroke:0.2px #111;">SimpleForExpr</div>
<div class="a" style="left:608px;top:368.0px;width:102px;height:1px;background:#e0e0e0"></div>
<div class="a" style="left:637px;top:304px;width:1px;height:64px;background:#e4e4e4"></div>
<div class="a" style="left:710px;top:304px;width:14px;height:222px;background:#f0f0f0"></div>
<svg class="a" style="left:713px;top:309px" width="8" height="4"><path d="M0 4H8L4.0 0Z" fill="#cfcfcf"/></svg>
<svg class="a" style="left:713px;top:517.3px" width="8" height="4"><path d="M0 0H8L4.0 4Z" fill="#cfcfcf"/></svg>
<div class="a" style="left:726px;top:382px;width:1px;height:145px;background:#a8a8a8"></div>
<div class="a" style="left:726px;top:292px;width:17px;height:91px;background:#fff;border:1px solid #c0c0c0;border-top:1.5px solid #a0a0a0;border-left:none"></div>
<svg class="a" style="left:728px;top:296px" width="14" height="14" viewBox="0 0 14 14"><path d="M7 8.5L1 11L7 13.5L13 11Z" fill="#eee" stroke="#333" stroke-width="0.9"/><path d="M7 5.5L1 8L7 10.5L13 8Z" fill="#eee" stroke="#333" stroke-width="0.9"/><path d="M7 2.5L1 5L7 7.5L13 5Z" fill="#eee" stroke="#333" stroke-width="0.9"/></svg>
<div class="a" style="left:734.5px;top:344.5px;width:0;height:0"><div style="position:absolute;left:-40px;top:-7px;width:80px;height:14px;line-height:14px;text-align:center;transform:rotate(-90deg);font-size:8.4px;font-weight:bold;color:#111;white-space:nowrap;-webkit-text-stroke:0.15px #111">Pila de llamadas</div></div>
<div class="a" style="left:734px;top:386px;width:7px;height:7px;border-radius:50%;background:#e02a2a"></div><div class="a" style="left:728px;top:391px;width:7.5px;height:7.5px;border-radius:50%;background:#1a5ad8"></div>
<div class="a" style="left:735px;top:450.5px;width:0;height:0"><div style="position:absolute;left:-50px;top:-7px;width:100px;height:14px;line-height:14px;text-align:center;transform:rotate(-90deg);font-size:8.6px;color:#111;white-space:nowrap;-webkit-text-stroke:0.2px #111">Puntos de depuración</div></div>


<!-- buttons -->
<div class="a" style="left:619px;top:535px;width:59px;height:17px;background:#e1e1e1;border:2px solid #2f72c0"></div>
<div class="t" style="left:632.8px;top:536.8px;font-size:8.7px;color:#1a1a1a;-webkit-text-stroke:0.15px #1a1a1a">Aceptar</div>
<div class="a" style="left:685px;top:535px;width:58px;height:17px;background:#e1e1e1;border:1px solid #adadad"></div>
<div class="t" style="left:696px;top:536.8px;font-size:8.6px;color:#1a1a1a;-webkit-text-stroke:0.15px #1a1a1a">Cancelar</div>
</body></html>
